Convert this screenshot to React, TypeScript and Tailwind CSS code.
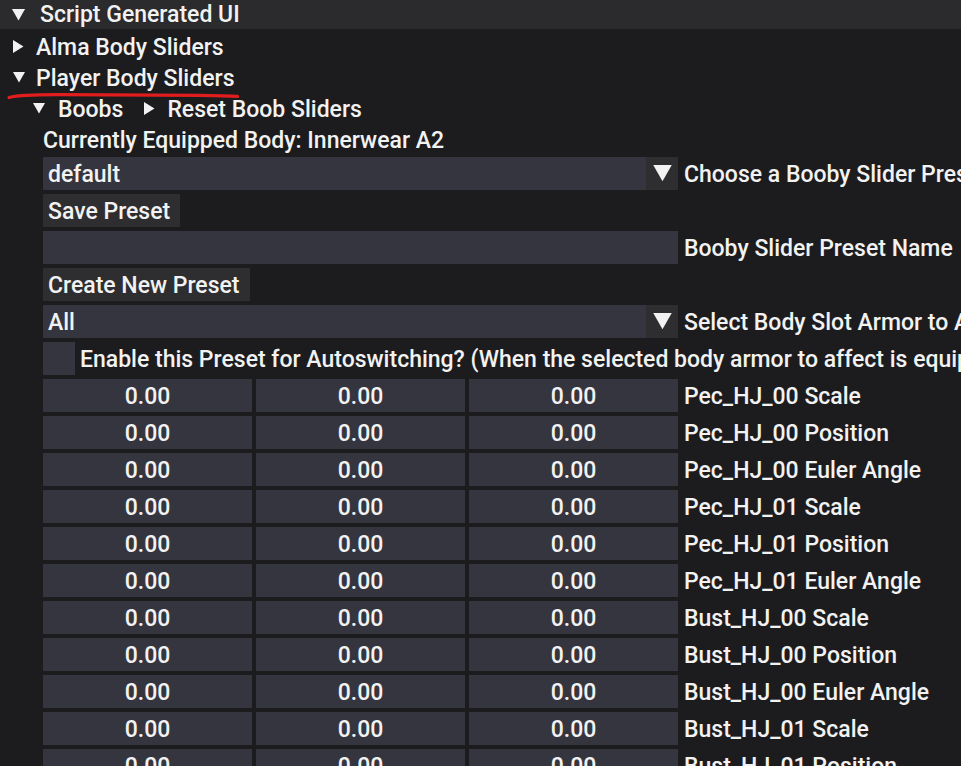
import React from "react";

const rows = [
  "Pec_HJ_00 Scale",
  "Pec_HJ_00 Position",
  "Pec_HJ_00 Euler Angle",
  "Pec_HJ_01 Scale",
  "Pec_HJ_01 Position",
  "Pec_HJ_01 Euler Angle",
  "Bust_HJ_00 Scale",
  "Bust_HJ_00 Position",
  "Bust_HJ_00 Euler Angle",
  "Bust_HJ_01 Scale",
  "Bust_HJ_01 Position",
  "Bust_HJ_01 Euler Angle",
];

function ArrowDown({ className = "" }: { className?: string }) {
  return (
    <svg viewBox="0 0 12 11" className={className} fill="currentColor">
      <polygon points="0,0 12,0 6,10.5" />
    </svg>
  );
}

function ArrowRight({ className = "" }: { className?: string }) {
  return (
    <svg viewBox="0 0 11 13" className={className} fill="currentColor">
      <polygon points="0,0 10.5,6.5 0,13" />
    </svg>
  );
}

function Combo({ value, label }: { value: string; label: string }) {
  return (
    <div className="flex h-[33px] items-center">
      <div className="flex h-full w-[635px] shrink-0">
        <div className="flex flex-1 items-center bg-[#35353f] pl-[5px] pt-[1px]">{value}</div>
        <div className="flex w-[32px] items-center justify-center bg-[#2e2e30]">
          <ArrowDown className="h-[17px] w-[19px]" />
        </div>
      </div>
      <span className="ml-[6px] pt-[1px]">{label}</span>
    </div>
  );
}

function Button({ children }: { children: React.ReactNode }) {
  return (
    <div className="flex h-[33px] items-center">
      <div className="flex h-full shrink-0 items-center bg-[#2e2e30] pl-[5px] pr-[10px] pt-[1px]">
        {children}
      </div>
    </div>
  );
}

export default function App() {
  return (
    <div className="relative h-[766px] w-[961px] overflow-hidden whitespace-nowrap bg-[#1c1c1e] font-['Roboto',sans-serif] text-[23px] font-medium leading-[27px] text-[#f2f2f2]">
      <div className="flex h-[29px] items-center bg-[#2b2b2d] pl-[11px]">
        <ArrowDown className="h-[12px] w-[15px] shrink-0" />
        <span className="ml-[14px]">Script Generated UI</span>
      </div>

      <div className="flex flex-col gap-[4px] pt-[4px]">
        <div className="flex h-[27px] items-center pl-[13px]">
          <ArrowRight className="h-[13px] w-[11px] shrink-0" />
          <span className="ml-[12px] pt-[1px]">Alma Body Sliders</span>
        </div>
        <div className="flex h-[27px] items-center pl-[13px]">
          <ArrowDown className="h-[11px] w-[12px] shrink-0" />
          <span className="ml-[11px] pt-[1px]">Player Body Sliders</span>
        </div>
        <div className="flex h-[27px] items-center pl-[33px]">
          <ArrowDown className="h-[11px] w-[12px] shrink-0" />
          <span className="ml-[13px] pt-[1px]">Boobs</span>
          <ArrowRight className="ml-[21px] h-[13px] w-[11px] shrink-0" />
          <span className="ml-[12px] pt-[1px]">Reset Boob Sliders</span>
        </div>

        <div className="flex flex-col gap-[4px] pl-[43px]">
          <div className="flex h-[27px] items-center pt-[1px]">Currently Equipped Body: Innerwear A2</div>
          <Combo value="default" label="Choose a Booby Slider Preset" />
          <Button>Save Preset</Button>
          <div className="flex h-[33px] items-center">
            <div className="h-full w-[635px] shrink-0 bg-[#35353f]" />
            <span className="ml-[6px] pt-[1px]">Booby Slider Preset Name</span>
          </div>
          <Button>Create New Preset</Button>
          <Combo value="All" label="Select Body Slot Armor to Affect" />
          <div className="flex h-[33px] items-center">
            <div className="h-full w-[32px] shrink-0 bg-[#35353f]" />
            <span className="ml-[5px] pt-[1px]">
              Enable this Preset for Autoswitching? (When the selected body armor to affect is equipped)
            </span>
          </div>
          {rows.map((label) => (
            <div key={label} className="flex h-[33px] items-center">
              <div className="flex h-full shrink-0 gap-[4px]">
                {[0, 1, 2].map((i) => (
                  <div key={i} className="flex w-[209px] items-center justify-center bg-[#35353f] pt-[1px]">
                    0.00
                  </div>
                ))}
              </div>
              <span className="ml-[6px] pt-[1px]">{label}</span>
            </div>
          ))}
        </div>
      </div>

      <svg
        className="pointer-events-none absolute left-0 top-[88px] h-[14px] w-[250px]"
        viewBox="0 88 250 14"
        fill="none"
      >
        <path
          d="M9 97.5 Q22 94.5 60 94.7 L200 95.3 Q225 95.6 237.5 96.4"
          stroke="#e21d1d"
          strokeWidth="3.2"
          strokeLinecap="round"
        />
      </svg>
    </div>
  );
}
